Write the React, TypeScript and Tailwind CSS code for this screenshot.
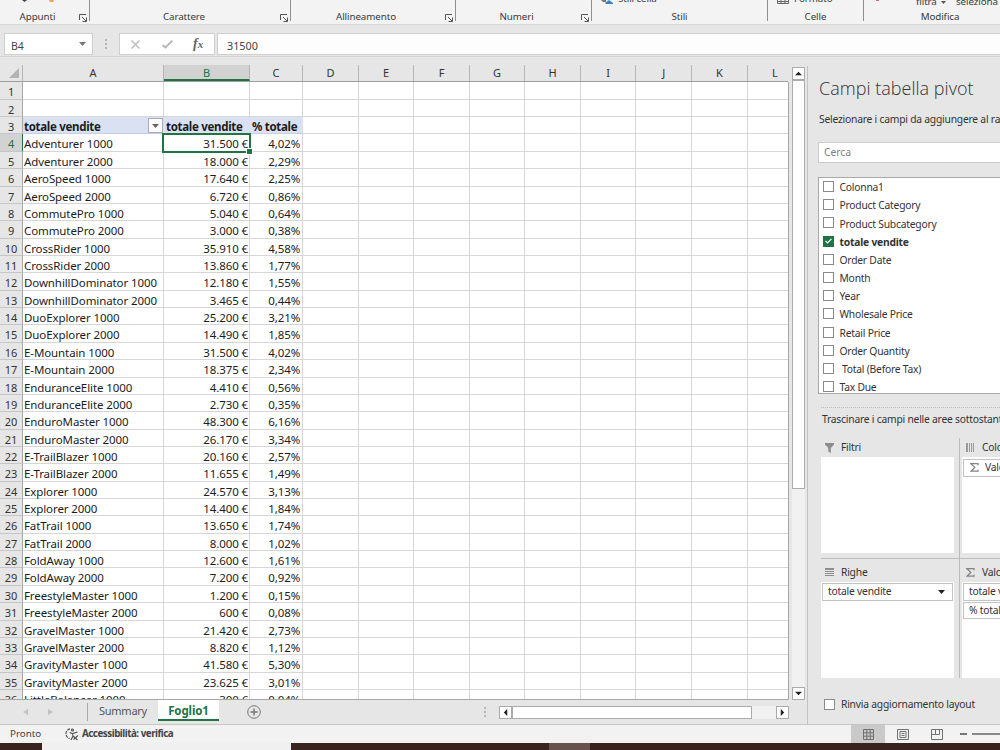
import React from "react";

const ROWS: [string, string, string][] = [
  ["Adventurer 1000", "31.500 €", "4,02%"],
  ["Adventurer 2000", "18.000 €", "2,29%"],
  ["AeroSpeed 1000", "17.640 €", "2,25%"],
  ["AeroSpeed 2000", "6.720 €", "0,86%"],
  ["CommutePro 1000", "5.040 €", "0,64%"],
  ["CommutePro 2000", "3.000 €", "0,38%"],
  ["CrossRider 1000", "35.910 €", "4,58%"],
  ["CrossRider 2000", "13.860 €", "1,77%"],
  ["DownhillDominator 1000", "12.180 €", "1,55%"],
  ["DownhillDominator 2000", "3.465 €", "0,44%"],
  ["DuoExplorer 1000", "25.200 €", "3,21%"],
  ["DuoExplorer 2000", "14.490 €", "1,85%"],
  ["E-Mountain 1000", "31.500 €", "4,02%"],
  ["E-Mountain 2000", "18.375 €", "2,34%"],
  ["EnduranceElite 1000", "4.410 €", "0,56%"],
  ["EnduranceElite 2000", "2.730 €", "0,35%"],
  ["EnduroMaster 1000", "48.300 €", "6,16%"],
  ["EnduroMaster 2000", "26.170 €", "3,34%"],
  ["E-TrailBlazer 1000", "20.160 €", "2,57%"],
  ["E-TrailBlazer 2000", "11.655 €", "1,49%"],
  ["Explorer 1000", "24.570 €", "3,13%"],
  ["Explorer 2000", "14.400 €", "1,84%"],
  ["FatTrail 1000", "13.650 €", "1,74%"],
  ["FatTrail 2000", "8.000 €", "1,02%"],
  ["FoldAway 1000", "12.600 €", "1,61%"],
  ["FoldAway 2000", "7.200 €", "0,92%"],
  ["FreestyleMaster 1000", "1.200 €", "0,15%"],
  ["FreestyleMaster 2000", "600 €", "0,08%"],
  ["GravelMaster 1000", "21.420 €", "2,73%"],
  ["GravelMaster 2000", "8.820 €", "1,12%"],
  ["GravityMaster 1000", "41.580 €", "5,30%"],
  ["GravityMaster 2000", "23.625 €", "3,01%"],
  ["LittleBalancer 1000", "300 €", "0,04%"],
];

const EMPTY_COLUMNS = ["D", "E", "F", "G", "H", "I", "J", "K", "L"];

const FIELDS = [
  "Colonna1",
  "Product Category",
  "Product Subcategory",
  "totale vendite",
  "Order Date",
  "Month",
  "Year",
  "Wholesale Price",
  "Retail Price",
  "Order Quantity",
  "\u00a0Total (Before Tax)",
  "Tax Due",
];

const Launcher = () => (
  <svg className="h-2 w-2 shrink-0" viewBox="0 0 8 8" fill="none" stroke="#555" strokeWidth="1">
    <path d="M0.5 6V0.5H7M3 3L7 7M7.5 3.5V7.5H3.5" />
  </svg>
);

interface GroupProps {
  label: string;
  className: string;
  launcher?: boolean;
  children?: React.ReactNode;
}

const RibbonGroup = ({ label, className, launcher, children }: GroupProps) => (
  <div className={`relative flex h-[21px] shrink-0 flex-col border-r border-[#8f8f8f] ${className}`}>
    <div className="flex h-[9px] shrink-0 items-end overflow-hidden whitespace-nowrap">{children}</div>
    <div className="flex h-4 shrink-0 items-center justify-center leading-4">{label}</div>
    {launcher && (
      <div className="absolute right-[2px] top-[14px]">
        <Launcher />
      </div>
    )}
  </div>
);

const Ribbon = () => (
  <div className="flex h-[25px] shrink-0 overflow-hidden border-b border-[#d6d6d6] bg-[#f3f3f3] text-[9.8px] tracking-[-0.1px] text-[#3a3a3a]">
    <RibbonGroup label="Appunti" className="w-[90px] pr-[14px]" launcher>
      <svg className="mb-[7px] ml-[21px] h-[2px] w-9" viewBox="0 0 36 2">
        <path d="M1 0h5L3.500 2z" fill="#444" />
        <path d="M28 0h5l-1 2h-3z" fill="#eda94f" />
      </svg>
    </RibbonGroup>
    <RibbonGroup label="Carattere" className="w-[201px] pr-3" launcher />
    <RibbonGroup label="Allineamento" className="w-[165px] pr-[14px]" launcher />
    <RibbonGroup label="Numeri" className="w-[136px] pr-[14px]" launcher />
    <RibbonGroup label="Stili" className="w-[176px]">
      <svg className="mb-[5px] ml-[9px] h-1 w-3" viewBox="0 0 12 4">
        <path d="M0 0h5v2H2z" fill="#777" />
        <path d="M4 3L8 0l4 3v1H5z" fill="#3b7fc4" />
      </svg>
      <span className="mb-[5px] ml-[5px] leading-[10px]">Stili cella</span>
    </RibbonGroup>
    <RibbonGroup label="Celle" className="w-24">
      <svg className="mb-[5px] ml-[9px] h-1 w-3" viewBox="0 0 12 4" fill="none" stroke="#666">
        <path d="M0.500 0V3.500H11.500V0M4 0V3M8 0V3M0 1.500H12" />
      </svg>
      <span className="mb-[5px] ml-[5px] leading-[10px]">Formato</span>
    </RibbonGroup>
    <RibbonGroup label="Modifica" className="w-[153px]">
      <span className="mb-2 ml-[12px] h-[1px] w-[3px] bg-[#e8637a]" />
      <span className="mb-[2px] ml-[37px] flex w-[40px] items-center leading-[10px]">
        filtra
        <svg className="ml-[4px] h-[3px] w-[5px]" viewBox="0 0 5 3">
          <path d="M0 0h5L2.500 3z" fill="#555" />
        </svg>
      </span>
      <span className="mb-[2px] leading-[10px]">seleziona</span>
    </RibbonGroup>
  </div>
);

const FormulaBar = () => (
  <div className="flex h-8 shrink-0 items-end border-b border-[#d4d4d4] pl-1 text-[#444]">
    <div className="mb-px flex h-[22px] w-[89px] items-center justify-between border border-[#cfcfcf] bg-white px-1.5">
      <span className="pt-[3px] text-[10.5px] leading-4">B4</span>
      <svg className="h-[4px] w-[7px]" viewBox="0 0 7 4">
        <path d="M0 0h7L3.500 4z" fill="#777" />
      </svg>
    </div>
    <div className="mb-[7px] ml-[12px] flex w-[2px] flex-col gap-[2px]">
      <i className="h-[2px] bg-[#b4b4b4]" />
      <i className="h-[2px] bg-[#b4b4b4]" />
      <i className="h-[2px] bg-[#b4b4b4]" />
    </div>
    <div className="mb-px ml-[12px] flex h-[22px] w-[96px] items-center border border-[#cfcfcf] bg-white pl-[11px]">
      <svg className="h-[9px] w-[9px]" viewBox="0 0 9 9" stroke="#b9b9b9" strokeWidth="1.300">
        <path d="M0.500 0.500L8.500 8.500M8.500 0.500L0.500 8.500" />
      </svg>
      <svg className="ml-[22px] h-[9px] w-[11px]" viewBox="0 0 11 9" fill="none" stroke="#b9b9b9" strokeWidth="2">
        <path d="M0.500 5L3.500 7.500L10.300 0.800" />
      </svg>
      <span className="ml-[20px] font-['Liberation_Serif',serif] text-[14px] font-bold italic leading-none text-[#666]">
        f<span className="text-[11px]">x</span>
      </span>
    </div>
    <div className="mb-px ml-[2px] flex h-[22px] flex-1 items-center border border-r-0 border-[#cfcfcf] bg-[#fdfdfd] pl-[9px]">
      <span className="pt-[3px] text-[10.8px] leading-4">31500</span>
    </div>
  </div>
);

const CELL = "h-full shrink-0 border-b border-r border-[#d6d6d6]";

interface RowProps {
  index: number;
  data?: [string, string, string];
}

const SheetRow = ({ index, data }: RowProps) => {
  const active = index === 4;
  const header = index === 3;
  return (
    <div className="flex h-[17.37px] shrink-0 leading-[19px]">
      <div
        className={`h-full w-[23px] shrink-0 border-b border-r text-center text-[11px] ${
          active
            ? "border-b-[#c6c6c6] border-r-[#217346] bg-[#d2d2d2] text-[#217346]"
            : "border-b-[#c6c6c6] border-r-[#a6a6a6] bg-[#e6e6e6] text-[#333]"
        }`}
      >
        {index}
      </div>
      {header ? (
        <div className="flex h-full w-[280.2px] shrink-0 whitespace-nowrap border-b border-[#c3cfe8] bg-[#d9e1f2] font-bold tracking-[-0.3px]">
          <div className="flex w-[141px] justify-between pl-[1px]">
            <span>totale vendite</span>
            <span className="mr-px mt-px flex h-[15px] w-[15px] items-center justify-center border border-[#aaa] bg-[#fbfbfb]">
              <svg className="h-[4px] w-[7px]" viewBox="0 0 7 4">
                <path d="M0 0h7L3.500 4z" fill="#666" />
              </svg>
            </span>
          </div>
          <div className="w-[86px] pl-[2px]">totale vendite</div>
          <div className="pl-[2px]">% totale</div>
        </div>
      ) : (
        <>
          <div className={`${CELL} w-[141px] whitespace-nowrap pl-[1px]`}>{data?.[0]}</div>
          <div className={`${CELL} w-[86px] pr-[1px] text-right`}>{data?.[1]}</div>
          <div className={`${CELL} w-[53.2px] pr-[2px] text-right`}>{data?.[2]}</div>
        </>
      )}
      {EMPTY_COLUMNS.map((c) => (
        <div key={c} className={`${CELL} w-[55.55px]`} />
      ))}
    </div>
  );
};

const ColumnHeaders = () => (
  <div className="flex h-[17.4px] w-[788px] shrink-0 overflow-hidden border-b border-[#9f9f9f] text-[11px] leading-[16px] text-[#333]">
    <div className="flex w-[23px] shrink-0 items-end justify-end border-r border-[#b5b5b5] pb-[3px] pr-[3px]">
      <svg className="h-[10px] w-[10px]" viewBox="0 0 10 10">
        <path d="M10 0V10H0z" fill="#b4b4b4" />
      </svg>
    </div>
    <div className="w-[141px] shrink-0 border-r border-[#b5b5b5] text-center">A</div>
    <div className="w-[86px] shrink-0 border-b-2 border-r border-b-[#217346] border-r-[#b5b5b5] bg-[#d2d2d2] text-center text-[#217346]">
      B
    </div>
    <div className="w-[53.2px] shrink-0 border-r border-[#b5b5b5] text-center">C</div>
    {EMPTY_COLUMNS.map((c) => (
      <div key={c} className="w-[55.55px] shrink-0 border-r border-[#b5b5b5] text-center">
        {c}
      </div>
    ))}
  </div>
);

const ARROWS = {
  up: "M0 6L4 2L8 6z",
  down: "M0 2L4 6L8 2z",
  left: "M6 0L2 4L6 8z",
  right: "M2 0L6 4L2 8z",
};

const Arrow = ({ dir }: { dir: keyof typeof ARROWS }) => (
  <div className="flex h-[13px] w-[13px] shrink-0 items-center justify-center border border-[#ababab] bg-white">
    <svg className="h-[7px] w-[7px]" viewBox="0 0 8 8">
      <path d={ARROWS[dir]} fill="#222" />
    </svg>
  </div>
);

const Sheet = () => (
  <div className="flex min-h-0 flex-1">
    <div className="flex w-[789px] shrink-0 flex-col overflow-hidden pt-2">
      <ColumnHeaders />
      <div className="relative flex min-h-0 flex-1 flex-col overflow-hidden border-b border-r border-[#a6a6a6] bg-white text-[11.5px] tracking-[-0.1px] text-[#1c1c1c]">
        <SheetRow index={1} />
        <SheetRow index={2} />
        <SheetRow index={3} />
        {ROWS.map((row, i) => (
          <SheetRow key={row[0]} index={i + 4} data={row} />
        ))}
        {/* selection frame and fill handle */}
        <div className="absolute left-[162px] top-[51px] h-[20px] w-[89px] border-2 border-[#217346]">
          <span className="absolute -bottom-[3px] -right-[3px] h-[5px] w-[5px] bg-[#217346] ring-1 ring-white" />
        </div>
      </div>
    </div>
    <div className="ml-[3px] mt-[10px] flex w-[13px] shrink-0 flex-col bg-[#f1f1f1]">
      <Arrow dir="up" />
      <div className="h-[409px] border border-[#ababab] bg-white" />
      <div className="flex-1" />
      <Arrow dir="down" />
    </div>
  </div>
);

const SheetTabs = () => (
  <div className="flex h-6 shrink-0">
    <div className="flex w-[87px] items-center gap-[20px] pl-[23px]">
      <svg className="h-[6px] w-[5px]" viewBox="0 0 5 6">
        <path d="M5 0V6L0 3z" fill="#c2c2c2" />
      </svg>
      <svg className="h-[6px] w-[5px]" viewBox="0 0 5 6">
        <path d="M0 0V6L5 3z" fill="#c2c2c2" />
      </svg>
    </div>
    <div className="mt-[3px] h-[18px] w-[71px] border-l border-[#aaa] text-center text-[11px] leading-[16px] tracking-[-0.25px] text-[#555]">
      Summary
    </div>
    <div className="-mt-px h-[22px] w-[61px] border-b-2 border-[#217346] bg-white text-center text-[11.5px] font-bold leading-[23px] tracking-[-0.1px] text-[#217346]">
      Foglio1
    </div>
    <svg className="ml-[28px] mt-[5px] h-[14px] w-[14px]" viewBox="0 0 14 14" fill="none" stroke="#777">
      <circle cx="7" cy="7" r="6.300" />
      <path d="M7 3.500V10.500M3.500 7H10.500" strokeWidth="1.400" />
    </svg>
    <div className="ml-[223px] mt-[7px] flex w-[2px] flex-col gap-[2px]">
      <i className="h-[2px] bg-[#b8b8b8]" />
      <i className="h-[2px] bg-[#b8b8b8]" />
      <i className="h-[2px] bg-[#b8b8b8]" />
    </div>
    <div className="ml-[13px] mt-[6px] flex h-[13px] w-[290px] bg-[#f1f1f1]">
      <Arrow dir="left" />
      <div className="w-[240px] border border-[#ababab] bg-white" />
      <div className="flex-1" />
      <Arrow dir="right" />
    </div>
  </div>
);

const Sigma = () => (
  <svg className="h-[9px] w-[9px] shrink-0" viewBox="0 0 9 9" fill="none" stroke="#858585" strokeWidth="1.300">
    <path d="M8 2.200V0.700H1L4.800 4.400L1 8.200H8V6.700" />
  </svg>
);

const AreaTitle = ({ icon, label }: { icon: React.ReactNode; label: string }) => (
  <div className="flex h-[19px] items-center whitespace-nowrap">
    {icon}
    <span>{label}</span>
  </div>
);

const Chip = ({ children }: { children: React.ReactNode }) => (
  <div className="mb-px flex h-[17.5px] shrink-0 items-center whitespace-nowrap border border-[#c3c3c3] bg-white">
    {children}
  </div>
);

const PivotPane = () => (
  <aside className="mt-[9px] flex w-[193px] shrink-0 flex-col overflow-hidden border-l border-[#c3c3c3] pl-[11px] text-[10.3px] tracking-[-0.22px] text-[#333]">
    <h1 className="mt-[9px] whitespace-nowrap font-['Open_Sans',sans-serif] text-[18px] font-light leading-[27px] tracking-[0.02px] text-[#333]">
      Campi tabella pivot
    </h1>
    <p className="mt-[7px] whitespace-nowrap leading-[20px]">Selezionare i campi da aggiungere al rapporto:</p>
    <div className="-ml-px -mr-1 mt-[13px] h-[21px] shrink-0 border border-[#cdcdcd] bg-white pl-[5px] leading-[18px] tracking-normal text-[#808080]">
      Cerca
    </div>
    <div className="-ml-px -mr-1 mt-[14px] h-[217px] shrink-0 overflow-hidden border border-[#a9a9a9] bg-white pl-1">
      {FIELDS.map((name) => {
        const checked = name === "totale vendite";
        return (
          <div key={name} className="flex h-[18.2px] items-center gap-[5.5px]">
            <span
              className={`mb-px flex h-[11px] w-[11px] items-center justify-center border ${
                checked ? "border-[#217346] bg-[#217346]" : "border-[#8a8a8a] bg-white"
              }`}
            >
              {checked && (
                <svg className="h-[6px] w-[7px]" viewBox="0 0 7 6" fill="none" stroke="#fff" strokeWidth="1.200">
                  <path d="M0.500 2.800L2.500 4.800L6.500 0.800" />
                </svg>
              )}
            </span>
            <span className={checked ? "pt-[1.5px] font-bold" : "pt-[1.5px]"}>{name}</span>
          </div>
        );
      })}
    </div>
    <div className="ml-[2px] mt-[13px] border-t border-dotted border-[#bdbdbd]" />
    <p className="ml-[3px] mt-[1px] whitespace-nowrap leading-[20px]">Trascinare i campi nelle aree sottostanti:</p>
    <div className="ml-[2px] mt-[9px] flex h-[240px] shrink-0">
      <div className="flex w-[139px] shrink-0 flex-col border-r border-[#bcbcbc]">
        <AreaTitle
          label="Filtri"
          icon={
            <svg className="ml-[4px] mr-[7px] h-[10px] w-[9px]" viewBox="0 0 9 10">
              <path d="M0 0H9V1.500L5.800 5V10L3.300 8.500V5L0 1.500z" fill="#8d8d8d" />
            </svg>
          }
        />
        <div className="h-[96px] w-[133px] bg-white" />
        <div className="mt-[5px] border-t border-[#bcbcbc]" />
        <div className="mt-[4px]">
          <AreaTitle
            label="Righe"
            icon={
              <svg className="ml-[4px] mr-[7px] h-[9px] w-[9px]" viewBox="0 0 9 9" stroke="#8d8d8d">
                <path d="M0 1H9" strokeWidth="2" />
                <path d="M0 3.500H9M0 5.500H9M0 7.500H9" />
              </svg>
            }
          />
        </div>
        <div className="w-[133px] flex-1 bg-white px-px pt-px">
          <Chip>
            <span className="ml-[5px] flex-1">totale vendite</span>
            <svg className="mr-[7px] h-[4px] w-[7px]" viewBox="0 0 7 4">
              <path d="M0 0h7L3.500 4z" fill="#222" />
            </svg>
          </Chip>
        </div>
      </div>
      <div className="flex w-[60px] shrink-0 flex-col">
        <AreaTitle
          label="Colonne"
          icon={
            <svg className="ml-[6px] mr-[8px] h-[9px] w-[8px] shrink-0" viewBox="0 0 8 9" stroke="#9a9a9a">
              <path d="M1 0V9" strokeWidth="2" />
              <path d="M3.500 0V9M5.500 0V9M7.500 0V9" />
            </svg>
          }
        />
        <div className="ml-[2px] h-[96px] bg-white px-px pt-[2px]">
          <Chip>
            <span className="ml-[6px] mr-[6px]">
              <Sigma />
            </span>
            Valori
          </Chip>
        </div>
        <div className="mt-[5px] border-t border-[#bcbcbc]" />
        <div className="mt-[4px]">
          <AreaTitle
            label="Valori"
            icon={
              <span className="ml-[6px] mr-[7px]">
                <Sigma />
              </span>
            }
          />
        </div>
        <div className="ml-[2px] flex-1 bg-white px-px pt-px">
          <Chip>
            <span className="ml-[5px]">totale vendite</span>
          </Chip>
          <Chip>
            <span className="ml-[5px]">% totale</span>
          </Chip>
        </div>
      </div>
    </div>
    <label className="ml-[5px] mt-[19px] flex items-center gap-[6px] whitespace-nowrap">
      <span className="h-[11px] w-[11px] border border-[#8a8a8a] bg-white" />
      Rinvia aggiornamento layout
    </label>
  </aside>
);

const StatusBar = () => (
  <footer className="flex h-[19px] shrink-0 border-t border-[#c6c6c6] bg-[#f2f2f2] text-[9.8px] leading-[17px] text-[#444]">
    <span className="ml-[10px] w-[55px]">Pronto</span>
    <svg className="mt-[3px] h-[13px] w-[14px]" viewBox="0 0 14 13" fill="none" stroke="#555" strokeWidth="1.200">
      <path d="M5 0.800A5 5 0 0 0 4.500 10.500" strokeDasharray="3 1" />
      <circle cx="7.500" cy="2" r="1" />
      <path d="M4.500 4.500L7.500 5.500L12.500 4M7.500 5.500L8 8L6 12M8 8L12.500 12M8.500 11.500L13 7.500" />
    </svg>
    <span className="ml-[3px] font-bold tracking-[-0.48px]">Accessibilità: verifica</span>
    <div className="ml-auto flex">
      <div className="flex w-[34px] items-center justify-center bg-[#c9c9c9]">
        <svg className="h-[11px] w-[11px]" viewBox="0 0 11 11" fill="none" stroke="#707070">
          <path d="M0.500 0.500H10.500V10.500H0.500zM3.800 0V11M7.200 0V11M0 3.800H11M0 7.200H11" />
        </svg>
      </div>
      <div className="flex w-[35px] items-center justify-center">
        <svg className="h-[11px] w-[12px]" viewBox="0 0 12 11" fill="none" stroke="#707070">
          <path d="M0.500 0.500H11.500V10.500H0.500zM3 2.500H9V8.500H3zM4.500 4.500H7.500M4.500 6.500H7.500" />
        </svg>
      </div>
      <div className="flex w-[34px] items-center justify-center">
        <svg className="h-[11px] w-[12px]" viewBox="0 0 12 11" fill="none" stroke="#707070">
          <path d="M0.500 0.500H11.500V10.500H0.500zM4.500 0V5.500M8.500 0V5.500M0 5.500H8.500" />
        </svg>
      </div>
      <div className="ml-[6px] flex w-[40px] items-center gap-[5px]">
        <i className="h-[2px] w-[7px] bg-[#777]" />
        <i className="h-[2px] flex-1 bg-[#8a8a8a]" />
      </div>
    </div>
  </footer>
);

export default function App() {
  return (
    <div className="flex h-[750px] w-[1000px] flex-col overflow-hidden bg-[#e6e6e6] font-['Noto_Sans',sans-serif]">
      <Ribbon />
      <FormulaBar />
      <div className="flex min-h-0 flex-1">
        <div className="flex w-[807px] shrink-0 flex-col">
          <Sheet />
          <SheetTabs />
        </div>
        <PivotPane />
      </div>
      <StatusBar />
      <div className="flex h-[7px] shrink-0 bg-[#38231e]">
        <div className="ml-[42px] w-[249px] bg-[#f0f0f0]" />
        <div className="ml-[258px] w-[41px] bg-[#67534e]" />
      </div>
    </div>
  );
}
